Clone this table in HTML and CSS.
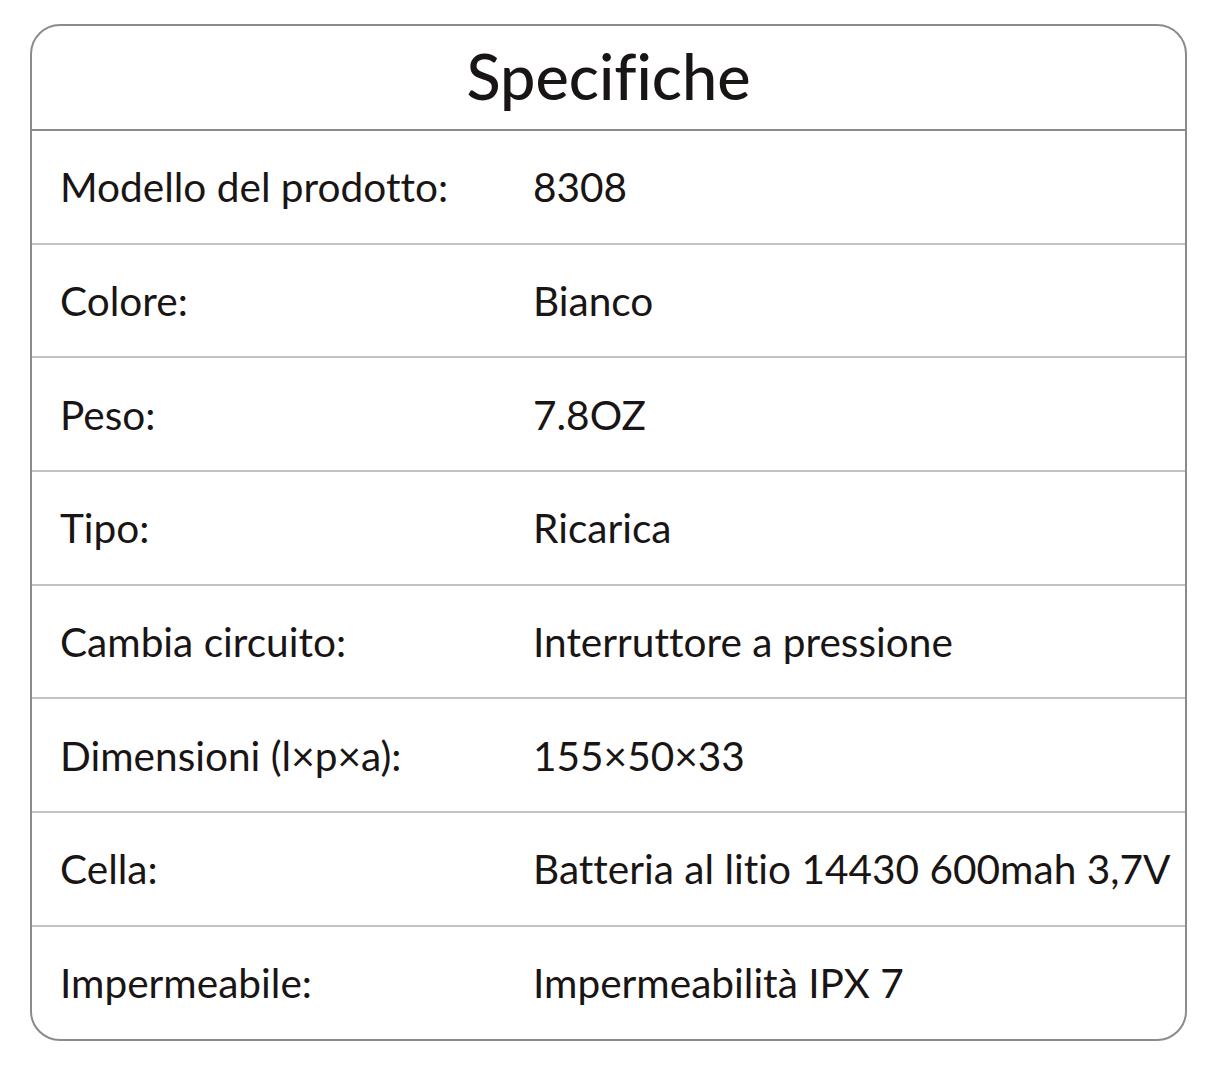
FILE: index.html
```html
<!DOCTYPE html>
<html lang="it">
<head>
<meta charset="utf-8">
<title>Specifiche</title>
<link rel="stylesheet" href="styles.css">
</head>
<body>
<div class="card">
  <div class="head">Specifiche</div>
  <div class="row"><div class="label">Modello del prodotto:</div><div class="value">8308</div></div>
  <div class="row"><div class="label">Colore:</div><div class="value">Bianco</div></div>
  <div class="row"><div class="label">Peso:</div><div class="value">7.8OZ</div></div>
  <div class="row"><div class="label">Tipo:</div><div class="value">Ricarica</div></div>
  <div class="row"><div class="label">Cambia circuito:</div><div class="value">Interruttore a pressione</div></div>
  <div class="row"><div class="label">Dimensioni (l×p×a):</div><div class="value">155×50×33</div></div>
  <div class="row"><div class="label">Cella:</div><div class="value">Batteria al litio 14430 600mah 3,7V</div></div>
  <div class="row last"><div class="label">Impermeabile:</div><div class="value">Impermeabilità IPX 7</div></div>
</div>
</body>
</html>
```

FILE: styles.css
```css
html, body {
  margin: 0;
  padding: 0;
  background: #ffffff;
}
body {
  font-family: "Lato", "Liberation Sans", sans-serif;
  color: #1a1515;
  font-variant-ligatures: none;
  font-feature-settings: "liga" 0;
}
.card {
  box-sizing: border-box;
  margin: 24px 0 0 30px;
  width: 1157px;
  border: 2px solid #8c8a8b;
  border-radius: 30px;
  overflow: hidden;
}
.head {
  box-sizing: border-box;
  height: 105px;
  padding-bottom: 4px;
  border-bottom: 2px solid #8c8a8b;
  display: flex;
  align-items: center;
  justify-content: center;
  font-size: 63px;
  font-weight: 500;
}
.row {
  height: 111.7px;
  border-bottom: 2px solid #c4c2c3;
  display: flex;
  align-items: center;
  font-size: 40.6px;
}
.row.last {
  border-bottom: none;
}
.label {
  box-sizing: border-box;
  width: 501px;
  padding-left: 28px;
  white-space: nowrap;
}
.value {
  flex: 1;
  white-space: nowrap;
}
```
